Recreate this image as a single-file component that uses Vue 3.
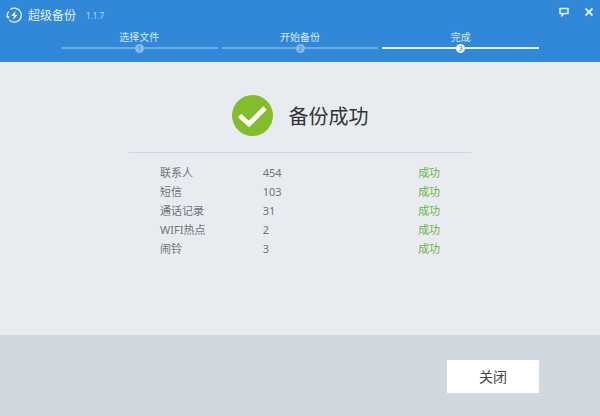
<script setup>
import { ref } from 'vue'

const version = '1.1.7'
const current = ref(3)

const steps = [
  { id: 1, label: '选择文件' },
  { id: 2, label: '开始备份' },
  { id: 3, label: '完成' },
]

const results = ref([
  { name: '联系人', count: 454, status: '成功' },
  { name: '短信', count: 103, status: '成功' },
  { name: '通话记录', count: 31, status: '成功' },
  { name: 'WIFI热点', count: 2, status: '成功' },
  { name: '闹铃', count: 3, status: '成功' },
])
</script>

<template>
  <div class="window">
    <header class="header">
      <div class="titlebar">
        <svg class="logo" viewBox="0 0 18 18" aria-hidden="true">
          <path d="M4.6 2.6A7.4 7.4 0 1 1 3.4 13.6" fill="none" stroke="currentColor" stroke-width="1.4" />
          <path d="M1.4 10.4A7.4 7.4 0 0 1 2.8 4.6" fill="none" stroke="currentColor" stroke-width="1.4" />
          <path d="M0 9.4h3.8L2.4 13z" fill="currentColor" />
          <path d="M10.4 4L5.4 9.6h3L7.4 13.8l5-5.6H9.3z" fill="currentColor" />
        </svg>
        <h1 class="title">超级备份</h1>
        <span class="version">{{ version }}</span>
        <div class="controls">
          <button type="button" class="control" aria-label="反馈">
            <svg viewBox="0 0 10 10">
              <path d="M1 1.5h8v5H5L3 8.5v-2H1z" fill="none" stroke="currentColor" stroke-width="1.6" />
            </svg>
          </button>
          <button type="button" class="control" aria-label="关闭窗口">
            <svg viewBox="0 0 10 10">
              <path d="M1.5 1.5l7 7M8.5 1.5l-7 7" fill="none" stroke="currentColor" stroke-width="1.8" />
            </svg>
          </button>
        </div>
      </div>
      <ol class="steps">
        <li v-for="step in steps" :key="step.id" class="step" :class="{ active: step.id === current }">
          <span class="step-label">{{ step.label }}</span>
          <span class="step-track">
            <span class="step-dot">{{ step.id }}</span>
          </span>
        </li>
      </ol>
    </header>

    <main class="main">
      <section class="result">
        <div class="result-head">
          <svg class="result-icon" viewBox="0 0 41 41" aria-hidden="true">
            <circle cx="20.5" cy="20.5" r="20.5" fill="#83bd29" />
            <path d="M7.5 20.5l9.500 8.500L33 13" fill="none" stroke="#fff" stroke-width="4.8" />
          </svg>
          <h2 class="result-title">备份成功</h2>
        </div>
        <table class="list">
          <tbody>
            <tr v-for="item in results" :key="item.name">
              <th scope="row" class="name">{{ item.name }}</th>
              <td class="count">{{ item.count }}</td>
              <td class="status">{{ item.status }}</td>
            </tr>
          </tbody>
        </table>
      </section>
    </main>

    <footer class="footer">
      <button type="button" class="close">关闭</button>
    </footer>
  </div>
</template>

<style>
body {
  margin: 0;
}
</style>

<style scoped>
.window {
  display: flex;
  flex-direction: column;
  min-height: 100vh;
  background: #e8ecf1;
  color: #333;
  font-family: 'Noto Sans', 'Noto Sans CJK SC', sans-serif;
}

.header {
  padding-bottom: 10px;
  background: #3187d8;
  color: #fff;
}

.titlebar {
  display: flex;
  align-items: center;
  height: 30px;
  padding: 0 6px;
}

.logo {
  width: 17px;
  height: 17px;
  color: #e4f3ff;
}

.title {
  margin: 0 0 0 5px;
  padding-top: 2px;
  font-size: 12px;
  font-weight: 400;
  line-height: 16px;
  color: #e4f1fd;
}

.version {
  margin-left: 10px;
  padding-top: 2px;
  font-size: 8px;
  line-height: 16px;
  color: #b9dcf8;
}

.controls {
  display: flex;
  gap: 15px;
  margin-left: auto;
  padding-bottom: 6px;
}

.control {
  width: 10px;
  height: 10px;
  padding: 0;
  border: 0;
  background: none;
  color: #e4f1fd;
  cursor: pointer;
}

.control svg {
  display: block;
}

.steps {
  display: flex;
  gap: 4px;
  margin: 0;
  padding: 0 61px;
  list-style: none;
}

.step {
  flex: 1;
  text-align: center;
  color: #d6eafb;
}

.step-label {
  display: block;
  font-size: 10px;
  line-height: 14px;
}

.step-track {
  display: flex;
  align-items: center;
  height: 8px;
}

.step-track::before,
.step-track::after {
  content: '';
  flex: 1;
  height: 2px;
  background: #69abe7;
}

.step-dot {
  width: 9px;
  height: 9px;
  border-radius: 50%;
  background: #83bbed;
  color: #3f8dd6;
  font-size: 7px;
  line-height: 9px;
}

.active .step-track::before,
.active .step-track::after {
  background: #e4f4ff;
}

.active .step-dot {
  background: #f0f9ff;
  color: #56728c;
}

.main {
  flex: 1;
  padding: 33px 24px;
}

.result {
  max-width: 342px;
  margin: 0 auto;
}

.result-head {
  display: flex;
  align-items: center;
  justify-content: center;
  gap: 16px;
  padding-bottom: 16px;
  border-bottom: 1px solid #cdd7e3;
}

.result-icon {
  width: 41px;
  height: 41px;
}

.result-title {
  margin: 0;
  padding-top: 2px;
  font-size: 20px;
  font-weight: 400;
  line-height: 28px;
}

.list {
  width: 100%;
  margin-top: 10px;
  padding-left: 31px;
  border-spacing: 0;
  table-layout: fixed;
  font-size: 11px;
  line-height: 19px;
  color: #707376;
}

.list th,
.list td {
  padding: 0;
  font-weight: 400;
  text-align: left;
}

.name {
  width: 33%;
}

.list .status {
  color: #67b53a;
}

.count {
  width: 50%;
}

.footer {
  display: flex;
  justify-content: flex-end;
  padding: 25px 61px 23px;
  background: #d0d7df;
}

.close {
  padding: 0 32px;
  border: 0;
  background: #fff;
  color: #444;
  font-family: inherit;
  font-size: 14px;
  line-height: 33px;
  cursor: pointer;
}
</style>
